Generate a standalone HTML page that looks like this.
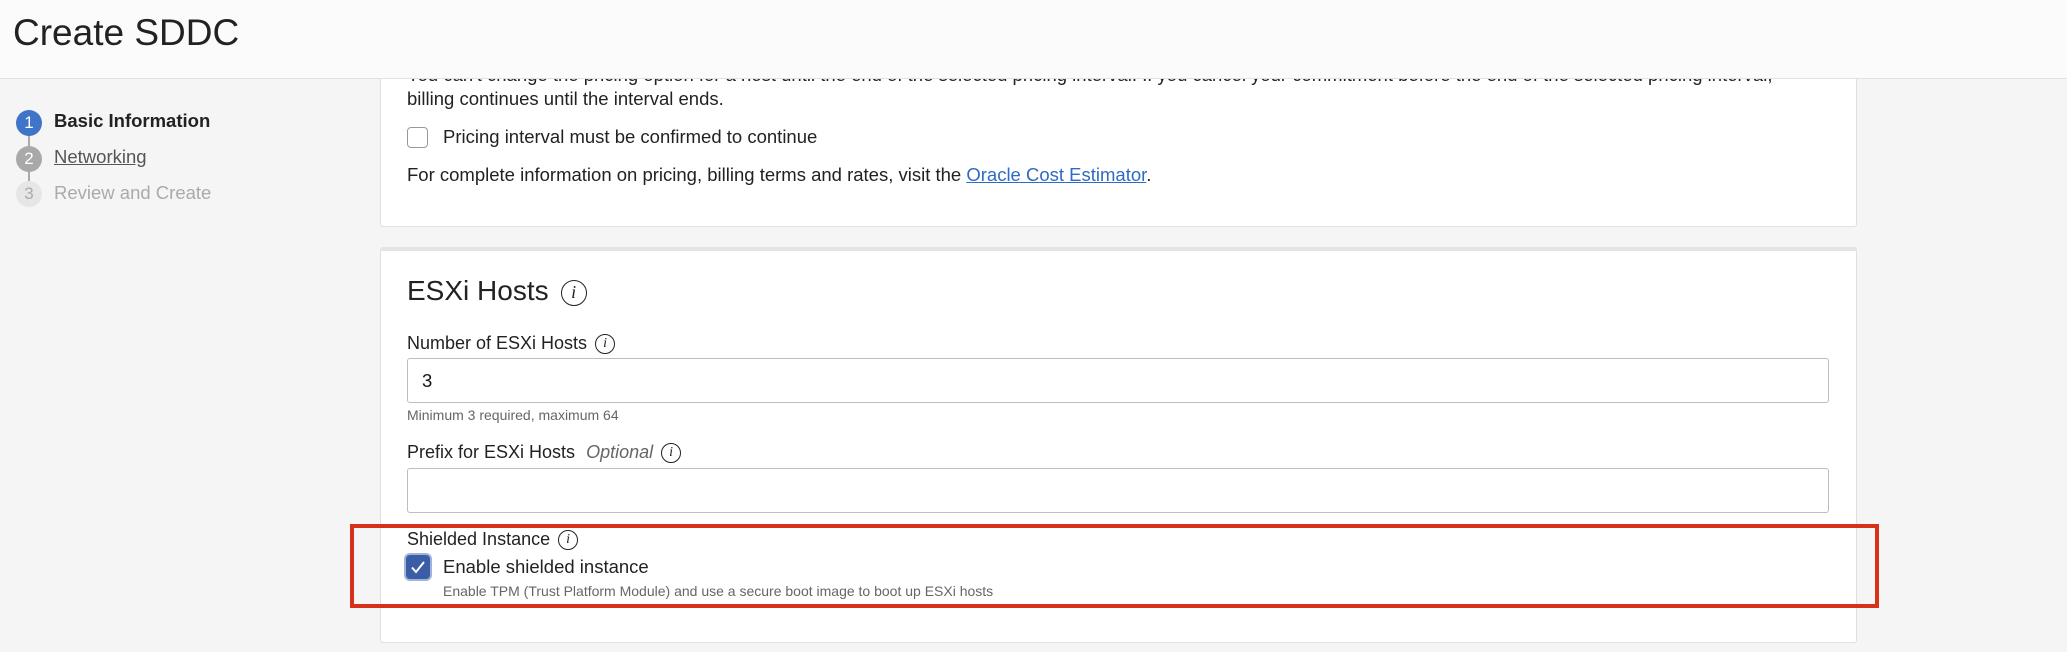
<!DOCTYPE html>
<html><head><style>
*{margin:0;padding:0;box-sizing:border-box}
body{width:2067px;height:652px;overflow:hidden;background:#f5f5f5;font-family:"Liberation Sans",Arial,sans-serif;color:#161513;position:relative}
.hdr{position:absolute;left:0;top:0;width:2067px;height:79px;background:#fbfbfb;border-bottom:1px solid #e2e2e2;z-index:2}
.hdr h1{position:absolute;left:13px;top:12px;font-weight:400;font-size:37px;color:#222}
.abs{position:absolute;white-space:nowrap}
.step{position:absolute;left:16px;width:26px;height:26px;border-radius:50%;color:#fff;font-size:17px;text-align:center;line-height:26px}
.card{position:absolute;left:380px;width:1477px;background:#fff;border:1px solid #e0e0e0;border-radius:3px}
.t{font-size:18.5px;color:#222}
.inp{position:absolute;left:407px;width:1422px;height:45px;border:1px solid #bdbdbd;border-radius:3px;background:#fff}
.info{display:inline-block;width:20px;height:20px;border:1.5px solid #222;border-radius:50%;font-family:"Liberation Serif",serif;font-style:italic;font-size:14px;text-align:center;line-height:17px;vertical-align:middle;margin-left:8px}
</style></head><body>
<div class="hdr"><h1>Create SDDC</h1></div>
<div class="abs" style="left:28px;top:123px;width:2px;height:72px;background:#aaa"></div>
<div class="step" style="top:110px;background:#3f74c9">1</div>
<div class="step" style="top:146px;background:#a9a9a9">2</div>
<div class="step" style="top:181px;background:#e6e6e6;color:#aaa">3</div>
<div class="abs" style="left:54px;top:110px;font-size:18.5px;font-weight:700;color:#222">Basic Information</div>
<div class="abs" style="left:54px;top:146px;font-size:18.5px;color:#555;text-decoration:underline">Networking</div>
<div class="abs" style="left:54px;top:182px;font-size:18.5px;color:#aaa">Review and Create</div>

<div class="card" style="top:40px;height:187px"></div>
<div class="abs t" style="left:407px;top:64px">You can't change the pricing option for a host until the end of the selected pricing interval. If you cancel your commitment before the end of the selected pricing interval,</div>
<div class="abs t" style="left:407px;top:88px">billing continues until the interval ends.</div>
<div class="abs" style="left:407px;top:127px;width:21px;height:21px;border:1px solid #999;border-radius:4px;background:#fff"></div>
<div class="abs t" style="left:443px;top:126px">Pricing interval must be confirmed to continue</div>
<div class="abs t" style="left:407px;top:164px">For complete information on pricing, billing terms and rates, visit the <span style="color:#2f6bc4;text-decoration:underline">Oracle Cost Estimator</span>.</div>

<div class="card" style="top:247px;height:396px;border-top:4px solid #e4e4e4"></div>
<div class="abs" style="left:407px;top:275px;font-size:28px;color:#222">ESXi Hosts<span class="info" style="width:26px;height:26px;line-height:23px;font-size:18px;margin-left:12px;vertical-align:2px">i</span></div>
<div class="abs t" style="left:407px;top:333px;font-size:18px">Number of ESXi Hosts<span class="info">i</span></div>
<div class="inp" style="top:358px"><span class="abs" style="left:14px;top:11px;font-size:18.5px">3</span></div>
<div class="abs" style="left:407px;top:407px;font-size:14px;color:#666">Minimum 3 required, maximum 64</div>
<div class="abs t" style="left:407px;top:442px;font-size:18px">Prefix for ESXi Hosts <i style="color:#666;margin-left:6px">Optional</i><span class="info">i</span></div>
<div class="inp" style="top:468px"></div>
<div class="abs t" style="left:407px;top:529px;font-size:18px">Shielded Instance<span class="info">i</span></div>
<div class="abs" style="left:406px;top:555px;width:24px;height:24px;border-radius:4px;background:#3b5da6;box-shadow:0 0 0 2px #9fb3db">
<svg width="24" height="24" viewBox="0 0 24 24"><path d="M6 12.5l4 4.5 8-10" fill="none" stroke="#fff" stroke-width="2"/></svg></div>
<div class="abs t" style="left:443px;top:556px">Enable shielded instance</div>
<div class="abs" style="left:443px;top:583px;font-size:14px;color:#666">Enable TPM (Trust Platform Module) and use a secure boot image to boot up ESXi hosts</div>
<div class="abs" style="left:350px;top:524px;width:1529px;height:84px;border:4px solid #d6321a"></div>
</body></html>
